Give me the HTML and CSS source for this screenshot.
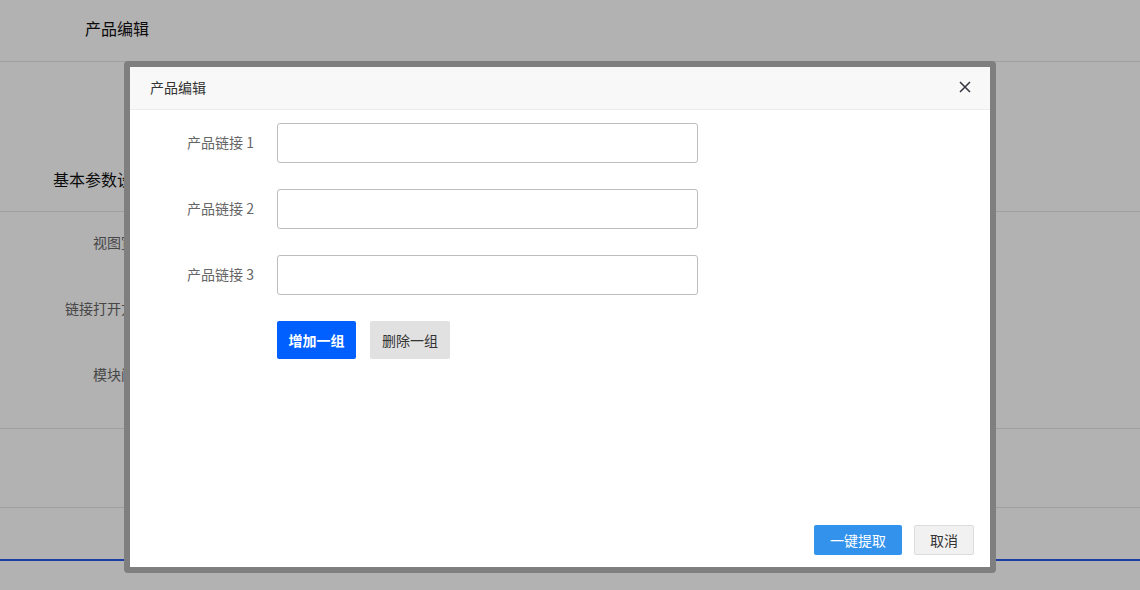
FILE: index.html
```html
<!DOCTYPE html>
<html lang="zh-CN">
<head>
    <meta charset="UTF-8">
    <meta name="viewport" content="width=device-width, initial-scale=1.0">
    <title>产品编辑</title>
    <link rel="stylesheet" href="styles.css">
</head>
<body>
    <div class="page">
        <div class="page-header">产品编辑</div>
        <div class="page-gap"></div>
        <div class="section-title">基本参数设置</div>
        <div class="section-body">
            <div class="field"><span class="field-label">视图宽度</span></div>
            <div class="field"><span class="field-label">链接打开方式</span></div>
            <div class="field"><span class="field-label">模块间距</span></div>
        </div>
        <div class="section-row"></div>
        <div class="section-foot"></div>
    </div>

    <div class="mask"></div>

    <div class="dialog">
        <div class="dialog-inner">
            <div class="dialog-header">
                <span class="dialog-title">产品编辑</span>
                <span class="dialog-close">
                    <svg width="12" height="12" viewBox="0 0 12 12">
                        <path d="M1 1L11 11M11 1L1 11" stroke="#33333f" stroke-width="1.5" fill="none"/>
                    </svg>
                </span>
            </div>
            <div class="dialog-body">
                <div class="form-row">
                    <label class="form-label" for="link1">产品链接 1</label>
                    <input class="form-input" type="text" id="link1">
                </div>
                <div class="form-row">
                    <label class="form-label" for="link2">产品链接 2</label>
                    <input class="form-input" type="text" id="link2">
                </div>
                <div class="form-row">
                    <label class="form-label" for="link3">产品链接 3</label>
                    <input class="form-input" type="text" id="link3">
                </div>
                <div class="form-row">
                    <span class="form-label"></span>
                    <button class="btn btn-add">增加一组</button>
                    <button class="btn btn-remove">删除一组</button>
                </div>
            </div>
            <div class="dialog-footer">
                <button class="btn-sm btn-primary">一键提取</button>
                <button class="btn-sm btn-cancel">取消</button>
            </div>
        </div>
    </div>
</body>
</html>
```

FILE: styles.css
```css
* {
    box-sizing: border-box;
}
body {
    margin: 0;
    padding: 0;
    font-family: "Noto Sans CJK SC", "Liberation Sans", sans-serif;
    background: #fff;
    overflow: hidden;
    height: 590px;
}
.page {
    width: 1140px;
    height: 590px;
}
.page-header {
    height: 62px;
    padding: 17px 0 0 85px;
    font-size: 16px;
    line-height: 22px;
    color: #111;
    border-bottom: 1px solid #e4e4e4;
}
.page-gap {
    height: 106px;
}
.section-title {
    height: 44px;
    padding-left: 53px;
    font-size: 16px;
    line-height: 22px;
    color: #111;
    border-bottom: 1px solid #e4e4e4;
}
.section-body {
    height: 217px;
    padding-top: 19px;
    border-bottom: 1px solid #e4e4e4;
}
.field {
    height: 66px;
}
.field-label {
    display: block;
    width: 149px;
    text-align: right;
    font-size: 14px;
    line-height: 22px;
    color: #666;
}
.section-row {
    height: 79px;
    border-bottom: 1px solid #e4e4e4;
}
.section-foot {
    height: 53px;
    border-bottom: 2px solid #2a56ee;
}
.mask {
    position: fixed;
    top: 0;
    left: 0;
    right: 0;
    bottom: 0;
    background: rgba(0, 0, 0, 0.3);
}
.dialog {
    position: absolute;
    left: 124px;
    top: 61px;
    width: 872px;
    height: 512px;
    padding: 6px;
    background: #7f7f7f;
    border-radius: 4px;
}
.dialog-inner {
    display: flex;
    flex-direction: column;
    height: 100%;
    background: #fff;
}
.dialog-header {
    display: flex;
    align-items: center;
    justify-content: space-between;
    height: 43px;
    padding: 0 19px 2px 20px;
    background: #f8f8f8;
    border-bottom: 1px solid #ececec;
}
.dialog-title {
    font-size: 14px;
    color: #333;
}
.dialog-close {
    display: flex;
    width: 12px;
    height: 12px;
}
.dialog-body {
    flex: 1;
    padding-top: 13px;
}
.form-row {
    display: flex;
    align-items: center;
    margin-bottom: 26px;
}
.form-label {
    width: 124px;
    margin-right: 23px;
    padding-bottom: 3px;
    text-align: right;
    font-size: 14px;
    color: #666;
}
.form-input {
    width: 421px;
    height: 40px;
    border: 1px solid #bdbdbd;
    border-radius: 3px;
    outline: none;
    padding: 0 10px;
    font-size: 14px;
}
.btn {
    height: 38px;
    border: none;
    border-radius: 2px;
    font-family: inherit;
    font-size: 14px;
    cursor: pointer;
}
.btn-add {
    width: 79px;
    background: #005fff;
    color: #fff;
    font-weight: bold;
    margin-right: 14px;
}
.btn-remove {
    width: 80px;
    background: #e1e1e1;
    color: #333;
}
.dialog-footer {
    display: flex;
    justify-content: flex-end;
    gap: 12px;
    padding: 0 16px 12px;
}
.btn-sm {
    height: 30px;
    border-radius: 2px;
    font-family: inherit;
    font-size: 14px;
    cursor: pointer;
}
.btn-primary {
    width: 88px;
    border: none;
    background: #3393ec;
    color: #fff;
}
.btn-cancel {
    width: 60px;
    border: 1px solid #dcdcdc;
    background: #f1f1f1;
    color: #333;
}
```
